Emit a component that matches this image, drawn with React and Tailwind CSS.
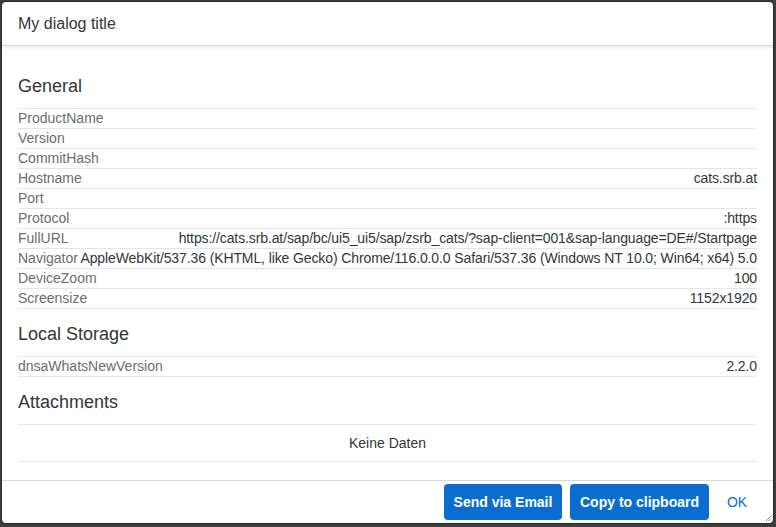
import React from "react";

const general = [
  ["ProductName", ""],
  ["Version", ""],
  ["CommitHash", ""],
  ["Hostname", "cats.srb.at"],
  ["Port", ""],
  ["Protocol", ":https"],
  ["FullURL", "https://cats.srb.at/sap/bc/ui5_ui5/sap/zsrb_cats/?sap-client=001&sap-language=DE#/Startpage"],
  ["Navigator", "AppleWebKit/537.36 (KHTML, like Gecko) Chrome/116.0.0.0 Safari/537.36 (Windows NT 10.0; Win64; x64) 5.0"],
  ["DeviceZoom", "100"],
  ["Screensize", "1152x1920"],
];

function Heading({ children }) {
  return (
    <div className="h-[48px] pt-[13px] text-[18px] leading-[24px] text-[#32363a] border-b border-[#e5e5e5]">
      {children}
    </div>
  );
}

function Row({ label, value }) {
  return (
    <div className="h-[20px] flex items-center justify-between border-b border-[#e5e5e5] text-[14px] leading-[19px] whitespace-nowrap">
      <span className="shrink-0 text-[#6a6d70]">{label}</span>
      <span className="text-right text-[#32363a] tracking-[-0.11px]">{value}</span>
    </div>
  );
}

export default function App() {
  return (
    <div
      className="w-[776px] h-[527px] bg-[#3e3e3e] pt-[2px] pl-[2px] overflow-hidden"
      style={{ fontFamily: '"Liberation Sans", Arial, sans-serif' }}
    >
      <div className="relative w-[771px] h-[521px] bg-white rounded-[4px] flex flex-col overflow-hidden shadow-[0_0_0_1px_#2a2a2a]">
        <div className="h-[44px] shrink-0 flex items-center px-[16px] border-b border-[#d9d9d9] shadow-[0_2px_4px_rgba(0,0,0,0.08)] relative z-10">
          <span className="text-[16px] text-[#32363a] pt-[1px]">My dialog title</span>
        </div>
        <div className="flex-1 px-[16px] pt-[15px]">
          <Heading>General</Heading>
          {general.map(([l, v]) => (
            <Row key={l} label={l} value={v} />
          ))}
          <Heading>Local Storage</Heading>
          <Row label="dnsaWhatsNewVersion" value="2.2.0" />
          <Heading>Attachments</Heading>
          <div className="h-[37px] flex items-center justify-center border-b border-[#e5e5e5] text-[14px] text-[#32363a]">
            Keine Daten
          </div>
        </div>
        <div className="h-[43px] shrink-0 border-t border-[#d9d9d9] flex items-center justify-end gap-[8px] pr-[16px]">
          <button className="w-[118px] h-[36px] rounded-[4px] bg-[#0a6ed1] text-white text-[14px] font-bold">
            Send via Email
          </button>
          <button className="w-[139px] h-[36px] rounded-[4px] bg-[#0a6ed1] text-white text-[14px] font-bold">
            Copy to clipboard
          </button>
          <button className="w-[40px] h-[36px] rounded-[4px] text-[#0a6ed1] text-[14px]">OK</button>
        </div>
        <svg className="absolute right-[1px] bottom-[1px]" width="7" height="7" viewBox="0 0 7 7">
          <path d="M6 1 L1 6 M6 3.5 L3.5 6 M6 5.5 L5.5 6" stroke="#8a8a8a" strokeWidth="1" />
        </svg>
      </div>
    </div>
  );
}
